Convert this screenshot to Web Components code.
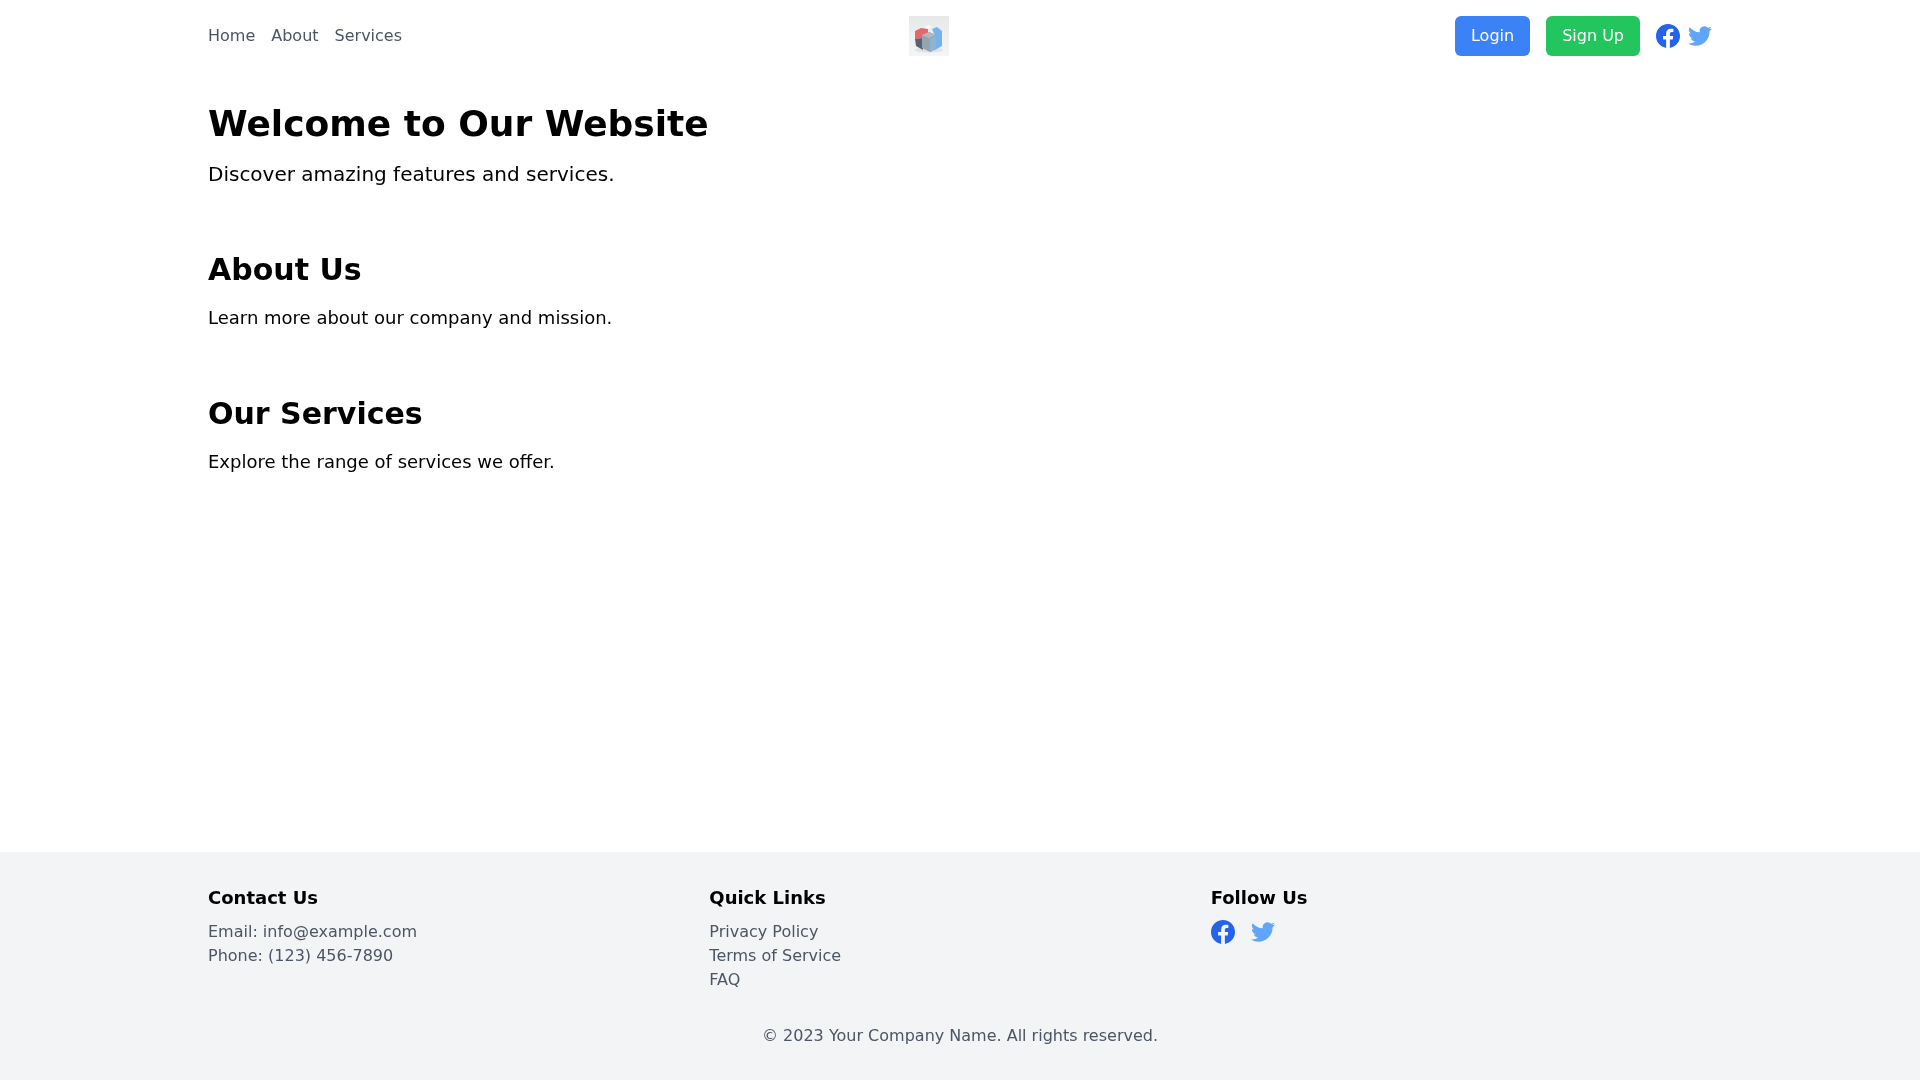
<!DOCTYPE html>
<html lang="en">
<head>
<meta charset="utf-8">
<title>Welcome to Our Website</title>
<style>
  html, body { margin: 0; padding: 0; }
  body {
    font-family: "DejaVu Sans", sans-serif;
    font-size: 16px;
    line-height: 24px;
    background: #fff;
    color: #000;
  }
</style>
</head>
<body>
<site-page>
  <site-header></site-header>
  <site-section slot="main" kind="hero" heading="Welcome to Our Website">Discover amazing features and services.</site-section>
  <site-section slot="main" heading="About Us">Learn more about our company and mission.</site-section>
  <site-section slot="main" heading="Our Services">Explore the range of services we offer.</site-section>
  <site-footer slot="footer"></site-footer>
</site-page>

<script>
const FB_PATH = "M24 12.073c0-6.627-5.373-12-12-12s-12 5.373-12 12c0 5.99 4.388 10.954 10.125 11.854v-8.385H7.078v-3.47h3.047V9.43c0-3.007 1.792-4.669 4.533-4.669 1.312 0 2.686.235 2.686.235v2.953H15.83c-1.491 0-1.956.925-1.956 1.874v2.25h3.328l-.532 3.47h-2.796v8.385C19.612 23.027 24 18.062 24 12.073z";
const TW_PATH = "M23.953 4.57a10 10 0 01-2.825.775 4.958 4.958 0 002.163-2.723c-.951.555-2.005.959-3.127 1.184a4.92 4.92 0 00-8.384 4.482C7.69 8.095 4.067 6.13 1.64 3.162a4.822 4.822 0 00-.666 2.475c0 1.71.87 3.213 2.188 4.096a4.904 4.904 0 01-2.228-.616v.06a4.923 4.923 0 003.946 4.827 4.996 4.996 0 01-2.212.085 4.936 4.936 0 004.604 3.417 9.867 9.867 0 01-6.102 2.105c-.39 0-.779-.023-1.17-.067a13.995 13.995 0 007.557 2.209c9.053 0 13.998-7.496 13.998-13.985 0-.21 0-.42-.015-.63A9.935 9.935 0 0024 4.59z";

class SitePage extends HTMLElement {
  constructor() {
    super();
    this.attachShadow({ mode: "open" });
    // own layer: text comes out grayscale like the reference
    this.shadowRoot.innerHTML = `
      <style>
        :host { display: flex; flex-direction: column; min-height: 100vh; will-change: transform; }
        main { flex: 1; box-sizing: border-box; width: 1536px; margin: 0 auto; padding: 32px 16px; }
      </style>
      <slot></slot>
      <main><slot name="main"></slot></main>
      <slot name="footer"></slot>
    `;
  }
}

class SocialIcon extends HTMLElement {
  constructor() {
    super();
    this.attachShadow({ mode: "open" });
  }
  connectedCallback() {
    const twitter = this.getAttribute("name") === "twitter";
    this.shadowRoot.innerHTML = `
      <style>
        :host { display: block; width: 24px; height: 24px; }
        svg { display: block; width: 24px; height: 24px; }
      </style>
      <svg viewBox="0 0 24 24" fill="${twitter ? "#60a5fa" : "#2563eb"}"><path d="${twitter ? TW_PATH : FB_PATH}"/></svg>
    `;
  }
}

class SiteLogo extends HTMLElement {
  constructor() {
    super();
    this.attachShadow({ mode: "open" });
    // the original is a small raster, so the cube is drawn soft
    this.shadowRoot.innerHTML = `
      <style>
        :host { display: block; width: 40px; height: 40px; }
        svg { display: block; }
      </style>
      <svg width="40" height="40" viewBox="0 0 40 40">
        <defs>
          <linearGradient id="bg" x1="0" y1="0" x2="0" y2="1">
            <stop offset="0" stop-color="#e6e8ea"/>
            <stop offset="1" stop-color="#f4f5f6"/>
          </linearGradient>
          <filter id="soft" x="-10%" y="-10%" width="120%" height="120%"><feGaussianBlur stdDeviation="0.55"/></filter>
        </defs>
        <rect width="40" height="40" fill="url(#bg)"/>
        <ellipse cx="20" cy="34" rx="14" ry="2.5" fill="#dfe1e4" filter="url(#soft)"/>
        <g filter="url(#soft)">
          <path d="M6 15 L12 12 L19 13 L19 22 L6 23 Z" fill="#e8666b"/>
          <path d="M6 23 L14 22 L14 34 L7 30 Z" fill="#5a636d"/>
          <path d="M23 13 L28 11 L33 15 L33 30 L26 34 L26 20 Z" fill="#74b3f0"/>
          <path d="M13 19 L20 16 L27 19 L27 33 L21 36 L13 32 Z" fill="#97a3ae"/>
          <path d="M13 19 L20 16 L27 19 L20 22 Z" fill="#b3b8bd"/>
          <path d="M21 23 L27 20 L27 33 L21 36 Z" fill="#8fb3d6"/>
          <path d="M15 11 L19 9 L23 11 L19 13 Z" fill="#f8f9fa"/>
        </g>
      </svg>
    `;
  }
}

class SiteHeader extends HTMLElement {
  constructor() {
    super();
    this.attachShadow({ mode: "open" });
    this.shadowRoot.innerHTML = `
      <style>
        :host { display: block; }
        nav {
          box-sizing: border-box; width: 1536px; height: 72px; margin: 0 auto; padding: 16px;
          display: flex; align-items: center; justify-content: space-between;
        }
        .group { display: flex; align-items: center; gap: 16px; }
        .icons { display: flex; gap: 8px; }
        a { color: #4b5563; text-decoration: none; }
        .btn { color: #fff; padding: 8px 16px; border-radius: 6px; }
        .blue { background: #3b82f6; }
        .green { background: #22c55e; }
      </style>
      <nav>
        <div class="group">
          <a href="#">Home</a>
          <a href="#">About</a>
          <a href="#">Services</a>
        </div>
        <site-logo></site-logo>
        <div class="group">
          <a class="btn blue" href="#">Login</a>
          <a class="btn green" href="#">Sign Up</a>
          <div class="icons">
            <social-icon name="facebook"></social-icon>
            <social-icon name="twitter"></social-icon>
          </div>
        </div>
      </nav>
    `;
  }
}

class SiteSection extends HTMLElement {
  constructor() {
    super();
    this.attachShadow({ mode: "open" });
  }
  connectedCallback() {
    this.shadowRoot.innerHTML = `
      <style>
        :host { display: block; margin-bottom: 64px; }
        h2 { margin: 0 0 16px; font-size: 30px; line-height: 36px; font-weight: 700; }
        p { margin: 0; font-size: 18px; line-height: 28px; }
        :host([kind="hero"]) h2 { font-size: 36px; line-height: 40px; }
        :host([kind="hero"]) p { font-size: 20px; }
      </style>
      <h2>${this.getAttribute("heading")}</h2>
      <p><slot></slot></p>
    `;
  }
}

class SiteFooter extends HTMLElement {
  constructor() {
    super();
    this.attachShadow({ mode: "open" });
    this.shadowRoot.innerHTML = `
      <style>
        :host { display: block; background: #f3f4f6; color: #4b5563; }
        .wrap { box-sizing: border-box; width: 1536px; margin: 0 auto; padding: 32px 16px; }
        .cols { display: grid; grid-template-columns: repeat(3, 1fr); }
        h3 { margin: 0 0 8px; font-size: 18px; line-height: 28px; font-weight: 700; color: #000; }
        p, ul { margin: 0; padding: 0; list-style: none; }
        a { color: inherit; text-decoration: none; }
        .icons { display: flex; gap: 16px; }
        .copy { margin-top: 32px; text-align: center; }
      </style>
      <div class="wrap">
        <div class="cols">
          <div>
            <h3>Contact Us</h3>
            <p>Email: info@example.com</p>
            <p>Phone: (123) 456-7890</p>
          </div>
          <div>
            <h3>Quick Links</h3>
            <ul>
              <li><a href="#">Privacy Policy</a></li>
              <li><a href="#">Terms of Service</a></li>
              <li><a href="#">FAQ</a></li>
            </ul>
          </div>
          <div>
            <h3>Follow Us</h3>
            <div class="icons">
              <social-icon name="facebook"></social-icon>
              <social-icon name="twitter"></social-icon>
            </div>
          </div>
        </div>
        <p class="copy">© 2023 Your Company Name. All rights reserved.</p>
      </div>
    `;
  }
}

customElements.define("social-icon", SocialIcon);
customElements.define("site-logo", SiteLogo);
customElements.define("site-header", SiteHeader);
customElements.define("site-section", SiteSection);
customElements.define("site-footer", SiteFooter);
customElements.define("site-page", SitePage);
</script>
</body>
</html>
